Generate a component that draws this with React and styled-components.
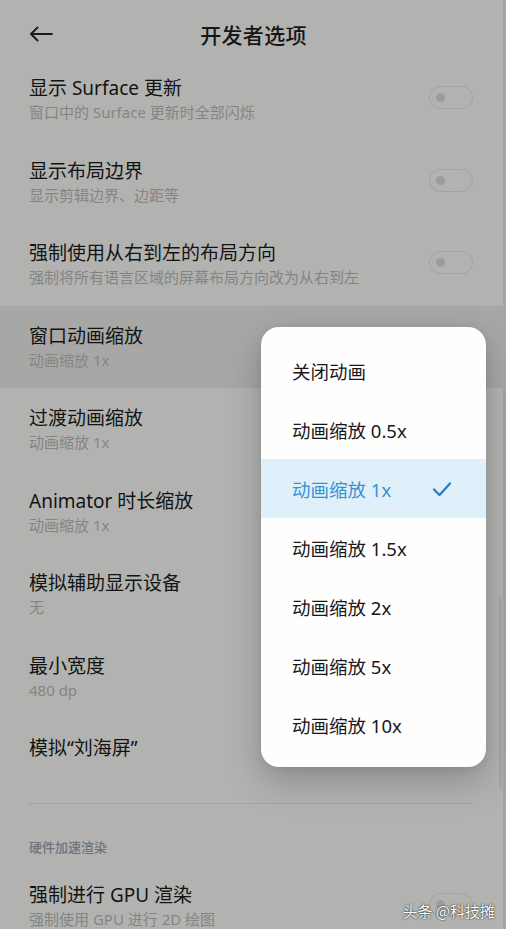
import React from "react";
import styled, { createGlobalStyle } from "styled-components";

const GlobalStyle = createGlobalStyle`
  html, body {
    margin: 0;
    padding: 0;
    background: #b2b3b1;
  }
  body {
    font-family: "Noto Sans", "Noto Sans CJK SC", sans-serif;
  }
`;

const settings = [
  { title: "显示 Surface 更新", sub: "窗口中的 Surface 更新时全部闪烁", toggle: true },
  { title: "显示布局边界", sub: "显示剪辑边界、边距等", toggle: true },
  { title: "强制使用从右到左的布局方向", sub: "强制将所有语言区域的屏幕布局方向改为从右到左", toggle: true },
  { title: "窗口动画缩放", sub: "动画缩放 1x", active: true },
  { title: "过渡动画缩放", sub: "动画缩放 1x" },
  { title: "Animator 时长缩放", sub: "动画缩放 1x" },
  { title: "模拟辅助显示设备", sub: "无" },
  { title: "最小宽度", sub: "480 dp" },
  { title: "模拟“刘海屏”" },
];

const options = [
  "关闭动画",
  "动画缩放 0.5x",
  "动画缩放 1x",
  "动画缩放 1.5x",
  "动画缩放 2x",
  "动画缩放 5x",
  "动画缩放 10x",
];

const Page = () => {
  return (
    <Screen>
      <GlobalStyle />
      <Header>
        <BackButton>
          <svg width="24" height="16" viewBox="0 0 24 16">
            <path d="M23 8H2M8.5 1.5L2 8l6.5 6.5" fill="none" stroke="#1c1c1c" strokeWidth="2" strokeLinecap="round" strokeLinejoin="round" />
          </svg>
        </BackButton>
        <Title>开发者选项</Title>
      </Header>

      {settings.map((s) => (
        <Row key={s.title} $active={s.active}>
          <RowText>
            <RowTitle>{s.title}</RowTitle>
            {s.sub && <RowSub>{s.sub}</RowSub>}
          </RowText>
          {s.toggle && <Toggle />}
        </Row>
      ))}

      <Divider />
      <SectionHeader>硬件加速渲染</SectionHeader>
      <Row>
        <RowText>
          <RowTitle>强制进行 GPU 渲染</RowTitle>
          <RowSub>强制使用 GPU 进行 2D 绘图</RowSub>
        </RowText>
        <Toggle />
      </Row>

      <ScrollThumb />

      <Menu>
        {options.map((o) => (
          <MenuItem key={o} $selected={o === "动画缩放 1x"}>
            {o}
            {o === "动画缩放 1x" && (
              <svg width="20" height="16" viewBox="0 0 20 16">
                <path d="M2 8.5l5.5 5.5L18 2.5" fill="none" stroke="#2f7fc1" strokeWidth="2.4" strokeLinecap="round" strokeLinejoin="round" />
              </svg>
            )}
          </MenuItem>
        ))}
      </Menu>

      <Watermark>头条 @科技摊</Watermark>
    </Screen>
  );
};

const Screen = styled.div`
  position: relative;
  width: 506px;
  height: 929px;
  overflow: hidden;
  background: #b2b3b1;
  box-shadow: inset -3px 0 0 #a4a5a3;
`;

const Header = styled.header`
  height: 58px;
  box-sizing: border-box;
  padding: 10px 28px 0 29px;
  display: flex;
  align-items: center;
  position: relative;
`;

const BackButton = styled.div`
  display: flex;
  align-items: center;
  width: 26px;
`;

const Title = styled.h1`
  margin: 0;
  flex: 1;
  text-align: center;
  font-size: 21px;
  font-weight: 500;
  color: #161616;
  padding-right: 26px;
  letter-spacing: 0.3px;
`;

const Row = styled.div`
  height: 82.5px;
  box-sizing: border-box;
  padding: 19px 33px 0 29px;
  display: flex;
  align-items: flex-start;
  justify-content: space-between;
  background: ${(p) => (p.$active ? "#a7a8a6" : "transparent")};
`;

const RowText = styled.div`
  display: flex;
  flex-direction: column;
`;

const RowTitle = styled.div`
  font-size: 19px;
  line-height: 23px;
  color: #131313;
`;

const RowSub = styled.div`
  font-size: 15px;
  line-height: 24px;
  color: #848583;
`;

const Toggle = styled.div`
  margin-top: 9px;
  width: 42px;
  height: 21px;
  border: 1.5px solid #a2a3a1;
  border-radius: 13px;
  position: relative;
  flex-shrink: 0;

  &::before {
    content: "";
    position: absolute;
    left: 6px;
    top: 6px;
    width: 9px;
    height: 9px;
    border-radius: 50%;
    background: #9c9d9b;
  }
`;

const Divider = styled.div`
  margin: 2px 33px 0 28px;
  height: 1px;
  background: #a3a4a2;
`;

const SectionHeader = styled.div`
  padding: 33px 29px 8px;
  font-size: 13px;
  line-height: 20px;
  font-weight: 500;
  color: #6d737c;
  font-family: "Noto Sans CJK SC", sans-serif;
`;

const ScrollThumb = styled.div`
  position: absolute;
  right: 4px;
  top: 598px;
  width: 3px;
  height: 190px;
  border-radius: 2px;
  background: #a6a7a5;
`;

const Menu = styled.div`
  position: absolute;
  left: 261px;
  top: 327px;
  width: 225px;
  box-sizing: border-box;
  padding: 14px 0 13px;
  background: #fefefe;
  border-radius: 18px;
  box-shadow: 0 14px 36px rgba(0, 0, 0, 0.22), 0 2px 8px rgba(0, 0, 0, 0.08);
`;

const MenuItem = styled.div`
  height: 59px;
  display: flex;
  align-items: center;
  justify-content: space-between;
  padding: 0 34px 0 31px;
  font-size: 18.5px;
  color: ${(p) => (p.$selected ? "#3a91d2" : "#181818")};
  background: ${(p) => (p.$selected ? "#e0f0fa" : "transparent")};
`;

const Watermark = styled.div`
  position: absolute;
  right: 11px;
  bottom: 8px;
  font-size: 15px;
  color: #ffffff;
  font-family: "Noto Sans CJK SC", sans-serif;
  text-shadow: 0 0 2px rgba(0, 0, 0, 0.7), 0 0 1px rgba(0, 0, 0, 0.8);
`;

export default Page;
